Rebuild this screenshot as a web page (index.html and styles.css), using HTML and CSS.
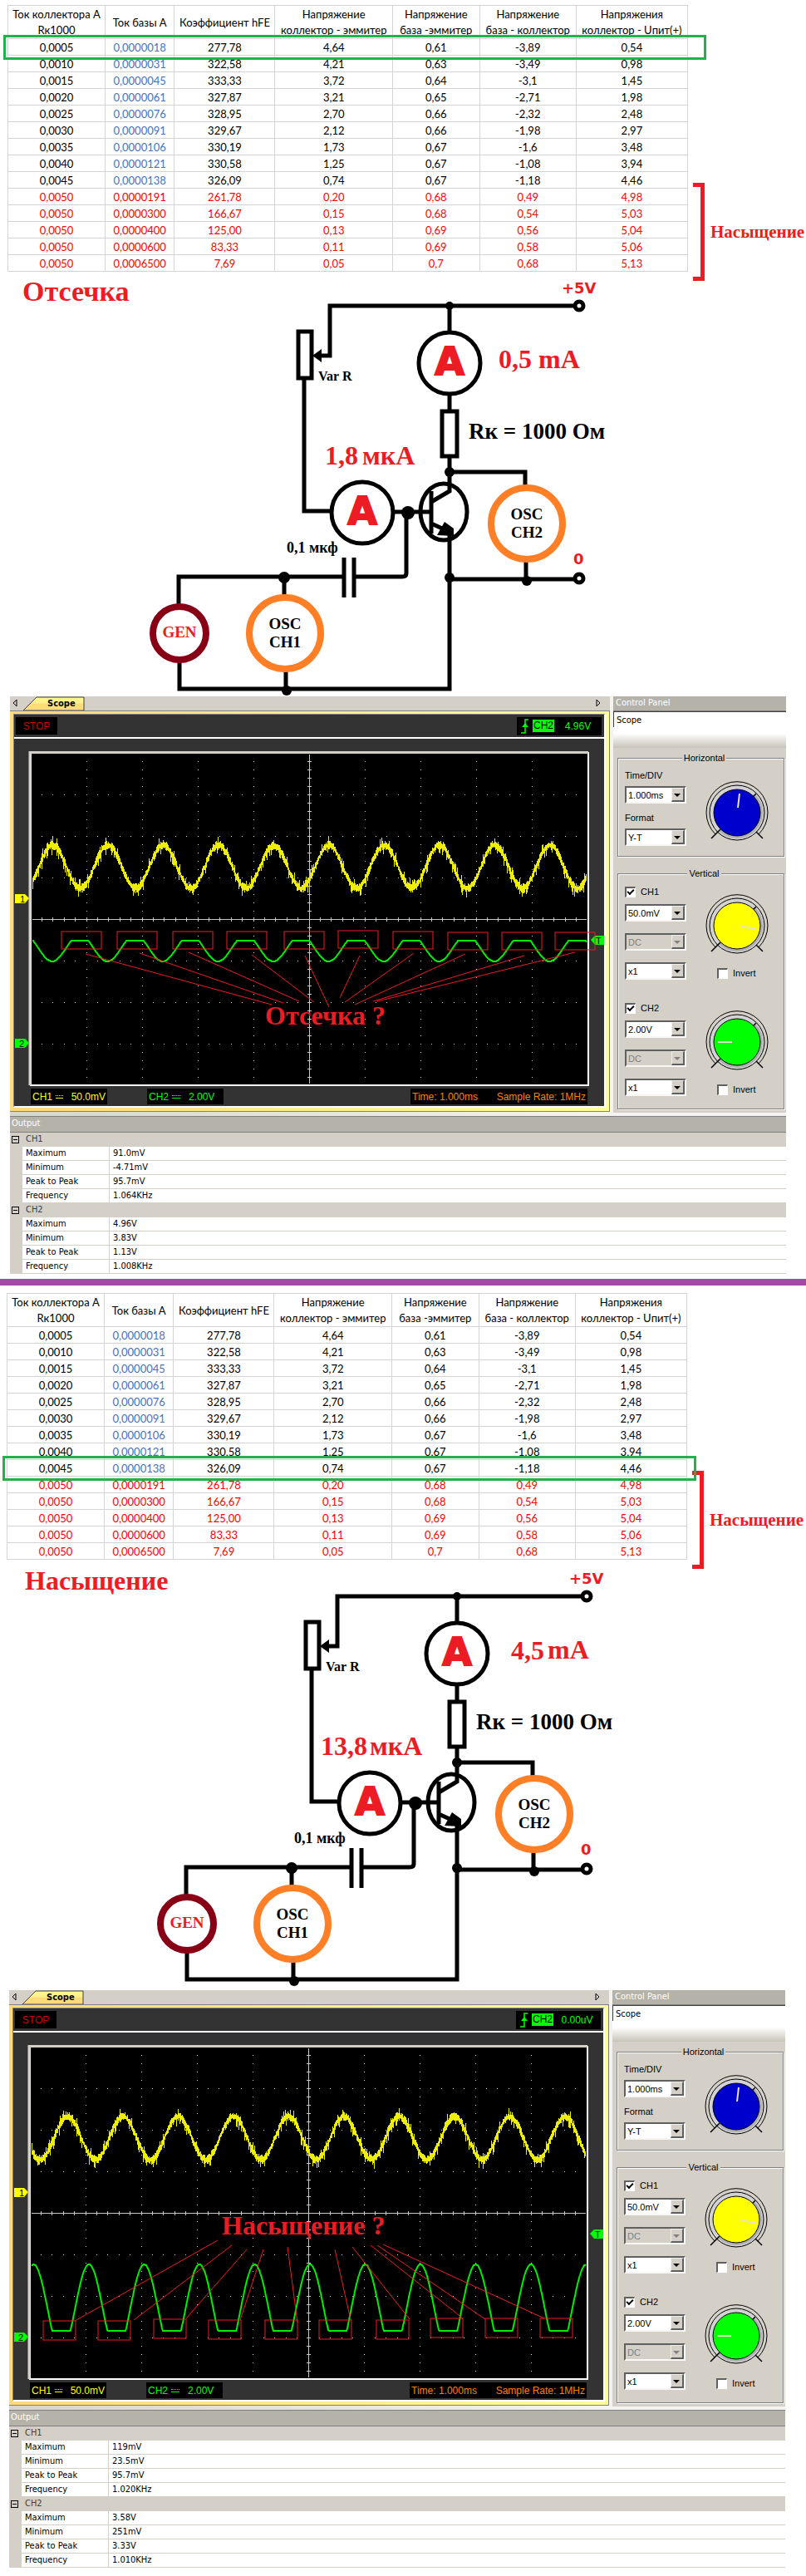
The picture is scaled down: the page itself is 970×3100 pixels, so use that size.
FILE: index.html
```html
<!DOCTYPE html>
<html lang="ru">
<head>
  <meta charset="UTF-8">
  <meta name="viewport" content="width=device-width, initial-scale=1.0">
  <title>Отсечка и насыщение транзистора</title>
  <link rel="stylesheet" href="styles.css">
</head>
<body>
  <!-- shared drawings -->
  <svg class="defs" width="0" height="0" aria-hidden="true">
    <defs>
      <g id="wires">
        <g fill="none" stroke="#000" stroke-width="5">
          <path d="M690 368H397V428H382"/>
          <path d="M366 457V615H398"/>
          <path d="M541 368V400M541 475V493M541 551V591L519 604"/>
          <path d="M541 568H632V585M633 676V698"/>
          <path d="M541 697H692"/>
          <path d="M474 616H519M489 616V690Q489 694 484 694H426"/>
          <path d="M414 694H215V728M342 694V717M344 808V829M216 797V829H541V640L519 630"/>
          <path d="M519 591V642M414 671V719M426 671V719"/>
          <rect x="359" y="399" width="16" height="56"/>
          <rect x="532" y="495" width="18" height="54"/>
        </g>
        <path d="M376 428L387 420V436ZM546 645L526 644L535 628L546 636Z"/>
        <g fill="#fff" stroke="#000" stroke-width="5">
          <circle cx="541" cy="437" r="37"/>
          <circle cx="436" cy="617" r="37"/>
          <circle cx="697" cy="368" r="5"/>
          <circle cx="697" cy="696" r="5"/>
        </g>
        <ellipse cx="534" cy="616" rx="28" ry="34" fill="none" stroke="#000" stroke-width="5"/>
        <g fill="#fff" stroke="#ff7f27" stroke-width="8">
          <circle cx="634" cy="630" r="43"/>
          <circle cx="343" cy="762" r="43"/>
        </g>
        <circle cx="216" cy="762" r="32" fill="#fff" stroke="#880015" stroke-width="8"/>
        <circle cx="541" cy="368" r="5"/>
        <circle cx="541" cy="568" r="6"/>
        <circle cx="491" cy="617" r="8"/>
        <circle cx="541" cy="695" r="6"/>
        <circle cx="634" cy="699" r="6"/>
        <circle cx="342" cy="695" r="7"/>
        <circle cx="345" cy="831" r="6"/>
      </g>

      <g id="graticule">
        <rect x="37" y="906" width="671" height="400" fill="#000" stroke="#fff" stroke-width="2"/>
        <path d="M36 1306V905.5H708" fill="none" stroke="#d4d0c8" stroke-width="3"/>
        <g fill="none" stroke="#c8c8c8" shape-rendering="crispEdges">
          <path stroke-dasharray="1 9" d="M104.5 916V1304M171.5 916V1304M238.5 916V1304M305.5 916V1304M439.5 916V1304M506.5 916V1304M573.5 916V1304M640.5 916V1304"/>
          <path stroke-dasharray="1 12.4" d="M50 956.5H706M50 1006.5H706M50 1056.5H706M50 1156.5H706M50 1206.5H706M50 1256.5H706"/>
          <path d="M372.5 908V1304M39 1106.5H706"/>
          <path stroke-width="5" stroke-dasharray="1 9" d="M372.5 916V1304"/>
          <path stroke-width="5" stroke-dasharray="1 12.4" d="M50 1106.5H706"/>
        </g>
        <path d="M18 1076H30L35 1081L30 1087H18Z" fill="#ff0"/>
        <path d="M18 1250H30L35 1255L30 1261H18Z" fill="#0f0"/>
        <path d="M727 1126H716L711 1131L716 1137H727Z" fill="#0f0"/>
      </g>

      <g id="knob-ring">
        <path d="M-26 26A37 37 0 1 1 26 26" fill="none" stroke="#000"/>
        <circle r="33" fill="#d2d2d4" stroke="#000"/>
        <path d="M22 -22A31 31 0 0 1 -22 22Z" fill="#b0b0b3"/>
        <path d="M-31 31L-20 20M31 31L23 23M19 -19L23 -23" stroke="#000" stroke-width="1.5"/>
      </g>

      <g id="trigger-edge">
        <path d="M1 17H6V1H10" fill="none" stroke="#0f0" stroke-width="1.5"/>
        <path d="M2 10L6 5L10 10Z" fill="#0f0"/>
      </g>
    </defs>
  </svg>

  <section class="mode">
    <div class="measurements">
      <table class="data-table">
        <thead>
          <tr><th>Ток коллектора А<br>Rк1000</th><th>Ток базы А</th><th>Коэффициент hFE</th><th>Напряжение<br>коллектор - эммитер</th><th>Напряжение<br>база -эммитер</th><th>Напряжение<br>база - коллектор</th><th>Напряжения<br>коллектор - Uпит(+)</th></tr>
        </thead>
        <tbody>
          <tr class="marked"><td>0,0005</td><td>0,0000018</td><td>277,78</td><td>4,64</td><td>0,61</td><td>-3,89</td><td>0,54</td></tr>
          <tr><td>0,0010</td><td>0,0000031</td><td>322,58</td><td>4,21</td><td>0,63</td><td>-3,49</td><td>0,98</td></tr>
          <tr><td>0,0015</td><td>0,0000045</td><td>333,33</td><td>3,72</td><td>0,64</td><td>-3,1</td><td>1,45</td></tr>
          <tr><td>0,0020</td><td>0,0000061</td><td>327,87</td><td>3,21</td><td>0,65</td><td>-2,71</td><td>1,98</td></tr>
          <tr><td>0,0025</td><td>0,0000076</td><td>328,95</td><td>2,70</td><td>0,66</td><td>-2,32</td><td>2,48</td></tr>
          <tr><td>0,0030</td><td>0,0000091</td><td>329,67</td><td>2,12</td><td>0,66</td><td>-1,98</td><td>2,97</td></tr>
          <tr><td>0,0035</td><td>0,0000106</td><td>330,19</td><td>1,73</td><td>0,67</td><td>-1,6</td><td>3,48</td></tr>
          <tr><td>0,0040</td><td>0,0000121</td><td>330,58</td><td>1,25</td><td>0,67</td><td>-1,08</td><td>3,94</td></tr>
          <tr><td>0,0045</td><td>0,0000138</td><td>326,09</td><td>0,74</td><td>0,67</td><td>-1,18</td><td>4,46</td></tr>
          <tr class="saturated"><td>0,0050</td><td>0,0000191</td><td>261,78</td><td>0,20</td><td>0,68</td><td>0,49</td><td>4,98</td></tr>
          <tr class="saturated"><td>0,0050</td><td>0,0000300</td><td>166,67</td><td>0,15</td><td>0,68</td><td>0,54</td><td>5,03</td></tr>
          <tr class="saturated"><td>0,0050</td><td>0,0000400</td><td>125,00</td><td>0,13</td><td>0,69</td><td>0,56</td><td>5,04</td></tr>
          <tr class="saturated"><td>0,0050</td><td>0,0000600</td><td>83,33</td><td>0,11</td><td>0,69</td><td>0,58</td><td>5,06</td></tr>
          <tr class="saturated"><td>0,0050</td><td>0,0006500</td><td>7,69</td><td>0,05</td><td>0,7</td><td>0,68</td><td>5,13</td></tr>
        </tbody>
      </table>
      <div class="range">
        <span class="bracket"></span>
        <span class="range-name">Насыщение</span>
      </div>
    </div>

    <div class="schematic">
      <h2>Отсечка</h2>
      <svg viewBox="0 338 970 500">
        <use href="#wires"/>
        <g class="sans">
          <text x="676" y="353">+5V</text>
          <text x="690" y="679">0</text>
          <text class="meter" x="541" y="451">A</text>
          <text class="meter" x="436" y="631">A</text>
        </g>
        <g class="value">
          <text x="600" y="443">0,5 mA</text>
          <text x="391" y="559">1,8</text>
          <text x="436" y="559">мкА</text>
        </g>
        <text class="resistor" x="564" y="528">Rк = 1000 Ом</text>
        <text class="small" x="383" y="458">Var R</text>
        <text class="cap" x="345" y="665">0,1 мкф</text>
        <g class="device">
          <text x="634" y="625">OSC</text><text x="634" y="647">CH2</text>
          <text x="343" y="757">OSC</text><text x="343" y="779">CH1</text>
          <text class="gen" x="216" y="767">GEN</text>
        </g>
      </svg>
    </div>

    <div class="instrument">
      <div class="scope-window">
        <div class="tabs">
          <svg width="722" height="17" viewBox="0 0 722 17" preserveAspectRatio="none">
            <defs>
              <linearGradient id="tab-fill" x1="0" y1="0" x2="0" y2="1"><stop offset="0" stop-color="#fff98f"/><stop offset="0.45" stop-color="#fff08a"/><stop offset="0.5" stop-color="#ffdc7a"/><stop offset="1" stop-color="#ffdc7a"/></linearGradient>
            </defs>
            <path d="M16 17L32 1H89V17Z" fill="url(#tab-fill)" stroke="#404040"/>
            <path d="M8 4L4 8L8 12ZM706 4L710 8L706 12Z" fill="none" stroke="#000"/>
          </svg>
          <span class="tab-name">Scope</span>
        </div>
        <div class="frame">
          <div class="scope">
            <div class="toolbar">
              <span class="lcd stop">STOP</span>
              <span class="lcd trigger"><svg width="12" height="18"><use href="#trigger-edge"/></svg><b>CH2</b><span>4.96V</span></span>
            </div>
            <svg class="screen" viewBox="17 889 710 420">
              <use href="#graticule"/>
              <g class="marker"><text x="24" y="1086">1</text><text x="23" y="1260">2</text><text x="717" y="1136">T</text></g>
              <path class="trace-1" data-peak="63" data-center="1043" data-seed="7"/>
              <path class="trace-2" data-peak="96" data-center="1141" data-amp="16" data-top="1132" data-bottom="1200"/>
              <g class="notes">
                <rect x="74" y="1121" width="48" height="21"/><rect x="141" y="1121" width="48" height="21"/><rect x="208" y="1121" width="48" height="21"/><rect x="273" y="1121" width="48" height="21"/><rect x="342" y="1121" width="48" height="21"/>
                <rect x="407" y="1120" width="48" height="21"/><rect x="473" y="1121" width="48" height="21"/><rect x="539" y="1122" width="48" height="21"/><rect x="604" y="1122" width="48" height="21"/><rect x="668" y="1122" width="48" height="21"/>
                <path d="M103 1148L327 1209M168 1147L341 1207M227 1146L360 1205M303 1149L378 1206M367 1150L396 1212M433 1150L409 1201M498 1147L415 1206M560 1148L427 1209M631 1150L449 1205M692 1146L454 1205"/>
                <text x="319" y="1233">Отсечка ?</text>
              </g>
            </svg>
            <div class="readouts">
              <span class="lcd ch1">CH1<i class="dc"></i><span>50.0mV</span></span>
              <span class="lcd ch2">CH2<i class="dc"></i><span>2.00V</span></span>
              <span class="lcd timing"><span>Time: 1.000ms</span><span>Sample Rate: 1MHz</span></span>
            </div>
          </div>
        </div>
      </div>

      <div class="control-panel">
        <div class="title-bar">Control Panel</div>
        <input class="device-name" type="text" value="Scope" aria-label="Device">
        <div class="strip"></div>
        <fieldset>
          <legend>Horizontal</legend>
          <div class="group">
            <div class="column horizontal">
              <label for="time-1">Time/DIV</label>
              <span class="combo"><select id="time-1"><option>1.000ms</option></select></span>
              <label for="format-1">Format</label>
              <span class="combo"><select id="format-1"><option>Y-T</option></select></span>
            </div>
            <div class="dial first">
              <svg width="80" height="80" viewBox="-40 -40 80 80"><use href="#knob-ring"/><circle r="28" fill="#00c" stroke="#000"/><path class="pointer" d="M1 -6L3 -23"/></svg>
            </div>
          </div>
        </fieldset>
        <fieldset>
          <legend>Vertical</legend>
          <div class="group">
            <div class="column">
              <label class="check"><input type="checkbox" checked>CH1</label>
              <span class="combo"><select aria-label="CH1 scale"><option>50.0mV</option></select></span>
              <span class="combo off"><select aria-label="CH1 coupling" disabled><option>DC</option></select></span>
              <span class="combo"><select aria-label="CH1 probe"><option>x1</option></select></span>
            </div>
            <div class="dial">
              <svg width="80" height="80" viewBox="-40 -40 80 80"><use href="#knob-ring"/><circle r="28" fill="#ff0" stroke="#000"/><path class="pointer" d="M5 1L23 4"/></svg>
              <label class="check"><input type="checkbox">Invert</label>
            </div>
          </div>
          <div class="group">
            <div class="column">
              <label class="check"><input type="checkbox" checked>CH2</label>
              <span class="combo"><select aria-label="CH2 scale"><option>2.00V</option></select></span>
              <span class="combo off"><select aria-label="CH2 coupling" disabled><option>DC</option></select></span>
              <span class="combo"><select aria-label="CH2 probe"><option>x1</option></select></span>
            </div>
            <div class="dial">
              <svg width="80" height="80" viewBox="-40 -40 80 80"><use href="#knob-ring"/><circle r="28" fill="#0f0" stroke="#000"/><path class="pointer" d="M-23 0H-6"/></svg>
              <label class="check"><input type="checkbox">Invert</label>
            </div>
          </div>
        </fieldset>
      </div>

      <div class="output">
        <div class="title-bar">Output</div>
        <table>
          <tbody>
            <tr class="channel"><td><button type="button" aria-label="Collapse CH1"></button></td><th colspan="2">CH1</th></tr>
            <tr><td></td><td>Maximum</td><td>91.0mV</td></tr>
            <tr><td></td><td>Minimum</td><td>-4.71mV</td></tr>
            <tr><td></td><td>Peak to Peak</td><td>95.7mV</td></tr>
            <tr><td></td><td>Frequency</td><td>1.064KHz</td></tr>
            <tr class="channel"><td><button type="button" aria-label="Collapse CH2"></button></td><th colspan="2">CH2</th></tr>
            <tr><td></td><td>Maximum</td><td>4.96V</td></tr>
            <tr><td></td><td>Minimum</td><td>3.83V</td></tr>
            <tr><td></td><td>Peak to Peak</td><td>1.13V</td></tr>
            <tr><td></td><td>Frequency</td><td>1.008KHz</td></tr>
          </tbody>
        </table>
      </div>
    </div>
  </section>

  <hr>

  <section class="mode saturation">
    <div class="measurements">
      <table class="data-table">
        <thead>
          <tr><th>Ток коллектора А<br>Rк1000</th><th>Ток базы А</th><th>Коэффициент hFE</th><th>Напряжение<br>коллектор - эммитер</th><th>Напряжение<br>база -эммитер</th><th>Напряжение<br>база - коллектор</th><th>Напряжения<br>коллектор - Uпит(+)</th></tr>
        </thead>
        <tbody>
          <tr><td>0,0005</td><td>0,0000018</td><td>277,78</td><td>4,64</td><td>0,61</td><td>-3,89</td><td>0,54</td></tr>
          <tr><td>0,0010</td><td>0,0000031</td><td>322,58</td><td>4,21</td><td>0,63</td><td>-3,49</td><td>0,98</td></tr>
          <tr><td>0,0015</td><td>0,0000045</td><td>333,33</td><td>3,72</td><td>0,64</td><td>-3,1</td><td>1,45</td></tr>
          <tr><td>0,0020</td><td>0,0000061</td><td>327,87</td><td>3,21</td><td>0,65</td><td>-2,71</td><td>1,98</td></tr>
          <tr><td>0,0025</td><td>0,0000076</td><td>328,95</td><td>2,70</td><td>0,66</td><td>-2,32</td><td>2,48</td></tr>
          <tr><td>0,0030</td><td>0,0000091</td><td>329,67</td><td>2,12</td><td>0,66</td><td>-1,98</td><td>2,97</td></tr>
          <tr><td>0,0035</td><td>0,0000106</td><td>330,19</td><td>1,73</td><td>0,67</td><td>-1,6</td><td>3,48</td></tr>
          <tr><td>0,0040</td><td>0,0000121</td><td>330,58</td><td>1,25</td><td>0,67</td><td>-1,08</td><td>3,94</td></tr>
          <tr class="marked"><td>0,0045</td><td>0,0000138</td><td>326,09</td><td>0,74</td><td>0,67</td><td>-1,18</td><td>4,46</td></tr>
          <tr class="saturated"><td>0,0050</td><td>0,0000191</td><td>261,78</td><td>0,20</td><td>0,68</td><td>0,49</td><td>4,98</td></tr>
          <tr class="saturated"><td>0,0050</td><td>0,0000300</td><td>166,67</td><td>0,15</td><td>0,68</td><td>0,54</td><td>5,03</td></tr>
          <tr class="saturated"><td>0,0050</td><td>0,0000400</td><td>125,00</td><td>0,13</td><td>0,69</td><td>0,56</td><td>5,04</td></tr>
          <tr class="saturated"><td>0,0050</td><td>0,0000600</td><td>83,33</td><td>0,11</td><td>0,69</td><td>0,58</td><td>5,06</td></tr>
          <tr class="saturated"><td>0,0050</td><td>0,0006500</td><td>7,69</td><td>0,05</td><td>0,7</td><td>0,68</td><td>5,13</td></tr>
        </tbody>
      </table>
      <div class="range">
        <span class="bracket"></span>
        <span class="range-name">Насыщение</span>
      </div>
    </div>

    <div class="schematic">
      <h2>Насыщение</h2>
      <svg viewBox="-9 338 970 500">
        <use href="#wires"/>
        <g class="sans">
          <text x="676" y="353">+5V</text>
          <text x="690" y="679">0</text>
          <text class="meter" x="541" y="451">A</text>
          <text class="meter" x="436" y="631">A</text>
        </g>
        <g class="value">
          <text x="606" y="444">4,5</text>
          <text x="650" y="443">mA</text>
          <text x="377" y="559">13,8</text>
          <text x="436" y="559">мкА</text>
        </g>
        <text class="resistor" x="564" y="528">Rк = 1000 Ом</text>
        <text class="small" x="383" y="458">Var R</text>
        <text class="cap" x="345" y="665">0,1 мкф</text>
        <g class="device">
          <text x="634" y="625">OSC</text><text x="634" y="647">CH2</text>
          <text x="343" y="757">OSC</text><text x="343" y="779">CH1</text>
          <text class="gen" x="216" y="767">GEN</text>
        </g>
      </svg>
    </div>

    <div class="instrument">
      <div class="scope-window">
        <div class="tabs">
          <svg width="722" height="17" viewBox="0 0 722 17" preserveAspectRatio="none">
            <path d="M16 17L32 1H89V17Z" fill="url(#tab-fill)" stroke="#404040"/>
            <path d="M8 4L4 8L8 12ZM706 4L710 8L706 12Z" fill="none" stroke="#000"/>
          </svg>
          <span class="tab-name">Scope</span>
        </div>
        <div class="frame">
          <div class="scope">
            <div class="toolbar">
              <span class="lcd stop">STOP</span>
              <span class="lcd trigger"><svg width="12" height="18"><use href="#trigger-edge"/></svg><b>CH2</b><span>0.00uV</span></span>
            </div>
            <svg class="screen" viewBox="17 889 710 420">
              <use href="#graticule"/>
              <g class="marker"><text x="24" y="1086">1</text><text x="23" y="1260">2</text><text x="717" y="1136">T</text></g>
              <path class="trace-1" data-peak="82" data-center="1016" data-seed="23"/>
              <path class="trace-2" data-peak="108" data-center="1221" data-amp="53" data-top="1100" data-bottom="1248"/>
              <g class="notes">
                <rect x="53" y="1236" width="39" height="23"/><rect x="119" y="1236" width="39" height="23"/><rect x="186" y="1234" width="39" height="23"/><rect x="252" y="1235" width="39" height="23"/><rect x="320" y="1235" width="39" height="23"/>
                <rect x="385" y="1235" width="39" height="23"/><rect x="454" y="1235" width="39" height="23"/><rect x="519" y="1233" width="39" height="23"/><rect x="585" y="1233" width="39" height="23"/><rect x="651" y="1233" width="39" height="23"/>
                <path d="M263 1139L91 1236M280 1145L162 1235M298 1150L225 1233M318 1150L290 1235M347 1147L359 1238M404 1150L423 1235M425 1147L494 1234M447 1145L558 1233M455 1145L585 1234M462 1144L656 1233"/>
                <text x="268" y="1132">Насыщение ?</text>
              </g>
            </svg>
            <div class="readouts">
              <span class="lcd ch1">CH1<i class="dc"></i><span>50.0mV</span></span>
              <span class="lcd ch2">CH2<i class="dc"></i><span>2.00V</span></span>
              <span class="lcd timing"><span>Time: 1.000ms</span><span>Sample Rate: 1MHz</span></span>
            </div>
          </div>
        </div>
      </div>

      <div class="control-panel">
        <div class="title-bar">Control Panel</div>
        <input class="device-name" type="text" value="Scope" aria-label="Device">
        <div class="strip"></div>
        <fieldset>
          <legend>Horizontal</legend>
          <div class="group">
            <div class="column horizontal">
              <label for="time-2">Time/DIV</label>
              <span class="combo"><select id="time-2"><option>1.000ms</option></select></span>
              <label for="format-2">Format</label>
              <span class="combo"><select id="format-2"><option>Y-T</option></select></span>
            </div>
            <div class="dial first">
              <svg width="80" height="80" viewBox="-40 -40 80 80"><use href="#knob-ring"/><circle r="28" fill="#00c" stroke="#000"/><path class="pointer" d="M1 -6L3 -23"/></svg>
            </div>
          </div>
        </fieldset>
        <fieldset>
          <legend>Vertical</legend>
          <div class="group">
            <div class="column">
              <label class="check"><input type="checkbox" checked>CH1</label>
              <span class="combo"><select aria-label="CH1 scale"><option>50.0mV</option></select></span>
              <span class="combo off"><select aria-label="CH1 coupling" disabled><option>DC</option></select></span>
              <span class="combo"><select aria-label="CH1 probe"><option>x1</option></select></span>
            </div>
            <div class="dial">
              <svg width="80" height="80" viewBox="-40 -40 80 80"><use href="#knob-ring"/><circle r="28" fill="#ff0" stroke="#000"/><path class="pointer" d="M5 1L23 4"/></svg>
              <label class="check"><input type="checkbox">Invert</label>
            </div>
          </div>
          <div class="group">
            <div class="column">
              <label class="check"><input type="checkbox" checked>CH2</label>
              <span class="combo"><select aria-label="CH2 scale"><option>2.00V</option></select></span>
              <span class="combo off"><select aria-label="CH2 coupling" disabled><option>DC</option></select></span>
              <span class="combo"><select aria-label="CH2 probe"><option>x1</option></select></span>
            </div>
            <div class="dial">
              <svg width="80" height="80" viewBox="-40 -40 80 80"><use href="#knob-ring"/><circle r="28" fill="#0f0" stroke="#000"/><path class="pointer" d="M-23 0H-6"/></svg>
              <label class="check"><input type="checkbox">Invert</label>
            </div>
          </div>
        </fieldset>
      </div>

      <div class="output">
        <div class="title-bar">Output</div>
        <table>
          <tbody>
            <tr class="channel"><td><button type="button" aria-label="Collapse CH1"></button></td><th colspan="2">CH1</th></tr>
            <tr><td></td><td>Maximum</td><td>119mV</td></tr>
            <tr><td></td><td>Minimum</td><td>23.5mV</td></tr>
            <tr><td></td><td>Peak to Peak</td><td>95.7mV</td></tr>
            <tr><td></td><td>Frequency</td><td>1.020KHz</td></tr>
            <tr class="channel"><td><button type="button" aria-label="Collapse CH2"></button></td><th colspan="2">CH2</th></tr>
            <tr><td></td><td>Maximum</td><td>3.58V</td></tr>
            <tr><td></td><td>Minimum</td><td>251mV</td></tr>
            <tr><td></td><td>Peak to Peak</td><td>3.33V</td></tr>
            <tr><td></td><td>Frequency</td><td>1.010KHz</td></tr>
          </tbody>
        </table>
      </div>
    </div>
  </section>

  <script src="traces.js"></script>
</body>
</html>
```
FILE: styles.css
```css
body {
  margin: 0;
  background: #fff;
  color: #000;
  font-family: Lato, "Open Sans", sans-serif;
  font-size: 13px;
}

svg {
  display: block;
}

.defs {
  position: absolute;
}

.mode {
  padding-top: 6px;
}

hr {
  height: 8px;
  margin: 6px 0 0;
  border: none;
  background: #a349a4;
}

.saturation {
  padding-top: 9px;
}

/* measurement table */

.measurements {
  display: flex;
  align-items: flex-start;
  padding-left: 9px;
}

.saturation .measurements {
  padding-left: 8px;
}

.data-table {
  flex: 1;
  table-layout: fixed;
  border-spacing: 0;
  border-top: 1px solid #d4d4d4;
  border-left: 1px solid #d4d4d4;
  text-align: center;
}

.data-table th,
.data-table td {
  box-sizing: border-box;
  height: 20px;
  padding: 1px 0 0;
  border-right: 1px solid #d4d4d4;
  border-bottom: 1px solid #d4d4d4;
  font-weight: normal;
  line-height: 18px;
  white-space: nowrap;
}

.data-table th {
  height: 40px;
  line-height: 19px;
}

.data-table th:nth-child(1) { width: 14.3%; }
.data-table th:nth-child(2) { width: 10.2%; }
.data-table th:nth-child(3) { width: 14.8%; }
.data-table th:nth-child(4) { width: 17.3%; }
.data-table th:nth-child(5) { width: 12.8%; }
.data-table th:nth-child(6) { width: 14.2%; }

.data-table td:nth-child(2) {
  color: #4472c4;
}

.data-table .saturated td {
  color: #f00;
}

.marked {
  position: relative;
}

.marked::after {
  content: "";
  position: absolute;
  inset: -5px -22px -5px -6px;
  border: 3px solid #22b14c;
}

.saturation .marked::after {
  right: -11px;
}

.range {
  display: flex;
  align-items: center;
  width: 136px;
  height: 118px;
  margin: 214px 0 0 6px;
  gap: 7px;
}

.saturation .range {
  width: 137px;
}

.bracket {
  width: 9px;
  height: 108px;
  border: 5px solid #ed1c24;
  border-left: none;
}

.range-name {
  color: #ed1c24;
  font: bold 21px "Liberation Serif", serif;
}

/* circuit */

.schematic {
  display: grid;
}

.saturation .schematic {
  margin-top: 3px;
}

.schematic > * {
  grid-area: 1 / 1;
}

.schematic > svg {
  width: 100%;
  overflow: visible;
}

.schematic h2 {
  z-index: 1;
  margin: 0 0 0 27px;
  justify-self: start;
  align-self: start;
  color: #ed1c24;
  font: bold 34px/26px "Liberation Serif", serif;
}

.saturation h2 {
  margin-left: 30px;
  font-size: 32px;
  line-height: 22px;
}

.schematic text {
  font-family: "Liberation Serif", serif;
  font-weight: bold;
}

.schematic .sans text {
  fill: #ed1c24;
  font-family: "DejaVu Sans", sans-serif;
  font-size: 18px;
}

.schematic .sans .meter {
  stroke: #ed1c24;
  stroke-width: 2;
  font-size: 46px;
  text-anchor: middle;
}

.value {
  fill: #ed1c24;
  font-size: 32px;
}

.resistor {
  font-size: 27px;
}

.small {
  font-size: 16px;
}

.cap {
  font-size: 18px;
}

.device {
  font-size: 19px;
  text-anchor: middle;
}

.gen {
  fill: #ed1c24;
}

/* oscilloscope program */

.instrument {
  display: grid;
  grid-template-columns: minmax(0, 1fr) 208px;
  gap: 4px;
  margin: 0 24px 0 12px;
  background: linear-gradient(90deg, #d8d5cf, #f4f3ef 75%);
  font-family: "Liberation Sans", Arial, sans-serif;
}

.saturation .instrument {
  margin: 4px 25px 0 11px;
}

.tabs {
  position: relative;
  border-bottom: 1px solid #808080;
  background: #d4d0c8;
}

.tabs svg {
  width: 100%;
}

.tab-name {
  position: absolute;
  top: 1px;
  left: 45px;
  font: bold 11px/15px "DejaVu Sans Condensed", "DejaVu Sans", sans-serif;
}

.frame {
  padding: 3px 4px 4px;
  border-right: 1px solid #808080;
  border-bottom: 1px solid #808080;
  background: linear-gradient(90deg, #ffda7a, #ffff99);
}

.scope {
  border: 1px solid #808080;
  border-right: 2px solid #fff;
  border-bottom: 2px solid #fff;
  background: #333;
}

.toolbar {
  display: flex;
  justify-content: space-between;
  align-items: center;
  box-sizing: border-box;
  height: 29px;
  padding: 0 3px 0 2px;
  border-bottom: 2px solid #fff;
}

.lcd {
  display: flex;
  align-items: center;
  box-sizing: border-box;
  background: #000;
  font-size: 12px;
}

.stop {
  width: 50px;
  height: 21px;
  justify-content: center;
  color: #d00000;
}

.trigger {
  width: 102px;
  height: 22px;
  padding-left: 4px;
  color: #0f0;
}

.trigger b {
  margin-left: 3px;
  padding: 0 1px;
  background: #0f0;
  color: #000;
  font-weight: normal;
  line-height: 15px;
}

.trigger span {
  flex: 1;
  text-align: center;
}

.screen {
  width: 100%;
}

.marker {
  font-size: 11px;
}

.trace-1 {
  fill: none;
  stroke: #eeee00;
  shape-rendering: crispEdges;
}

.trace-2 {
  fill: none;
  stroke: #00ee00;
  stroke-width: 2;
}

.notes {
  fill: none;
  stroke: #ed1c24;
}

.notes text {
  fill: #ed1c24;
  stroke: none;
  font: bold 32px "Liberation Serif", serif;
}

.readouts {
  display: flex;
  padding: 1px 20px 2px;
  gap: 48px;
}

.readouts .lcd {
  height: 19px;
  padding: 0 2px;
}

.ch1,
.ch2 {
  width: 92px;
  gap: 4px;
}

.ch1 {
  color: #ff0;
}

.ch2 {
  color: #0f0;
}

.readouts .ch1 span,
.readouts .ch2 span {
  margin-left: 6px;
}

.dc {
  width: 10px;
  height: 2px;
  border-top: 1px dotted currentColor;
  border-bottom: 1px solid currentColor;
}

.timing {
  width: 213px;
  margin-left: auto;
  justify-content: space-between;
  color: #ff8000;
}

/* control panel */

.control-panel {
  background: #d4d0c8;
  font-size: 11px;
  line-height: 13px;
}

.title-bar {
  padding-left: 3px;
  border-bottom: 1px solid #808080;
  background: #b5b2a9;
  color: #fff;
  font: 11px/16px "DejaVu Sans Condensed", "DejaVu Sans", sans-serif;
}

.control-panel .title-bar {
  height: 17px;
}

.device-name {
  display: block;
  box-sizing: border-box;
  width: 100%;
  height: 19px;
  padding: 0 3px;
  border: none;
  border-top: 1px solid #404040;
  border-left: 1px solid #404040;
  font: 11px "DejaVu Sans Condensed", "DejaVu Sans", sans-serif;
}

.strip {
  height: 25px;
  margin-bottom: 6px;
  background: linear-gradient(#fff 30%, #c8c4ba);
}

fieldset {
  min-width: 0;
  margin: 0 2px 14px 5px;
  padding: 8px 0 12px 8px;
  border: 1px solid #808080;
  box-shadow: 1px 1px 0 #fff, inset 1px 1px 0 #fff;
}

fieldset + fieldset {
  margin-bottom: 4px;
  padding: 9px 0 15px 8px;
}

legend {
  margin: 0 auto;
  padding: 0 2px;
  background: #d4d0c8;
}

.group {
  display: flex;
  gap: 21px;
}

.group + .group {
  margin-top: 28px;
}

.column {
  display: flex;
  flex-direction: column;
  width: 74px;
  gap: 14px;
}

.column .check {
  margin-bottom: -6px;
}

.horizontal {
  gap: 6px;
}

.horizontal .combo + label {
  margin-top: 5px;
}

.check {
  display: flex;
  align-items: center;
  gap: 6px;
}

.check input {
  appearance: none;
  box-sizing: border-box;
  width: 13px;
  height: 13px;
  margin: 0;
  border: 1px solid #fff;
  border-top: 2px solid #606060;
  border-left: 2px solid #606060;
  background: #fff;
}

.check input:checked::after {
  content: "";
  display: block;
  box-sizing: border-box;
  width: 8px;
  height: 5px;
  margin: 1px;
  border-left: 2px solid #000;
  border-bottom: 2px solid #000;
  transform: rotate(-45deg);
}

.combo {
  position: relative;
}

.combo select {
  display: block;
  appearance: none;
  box-sizing: border-box;
  width: 100%;
  height: 21px;
  padding: 0 18px 0 2px;
  border: 2px solid #f8f7f4;
  border-top-color: #606060;
  border-left-color: #606060;
  border-radius: 0;
  background: #fff;
  color: #000;
  font: 11px "Liberation Sans", Arial, sans-serif;
  opacity: 1;
}

.combo::before {
  content: "";
  position: absolute;
  top: 2px;
  right: 2px;
  box-sizing: border-box;
  width: 16px;
  height: 17px;
  border: 1px solid #f0eee8;
  border-right: 2px solid #606060;
  border-bottom: 2px solid #606060;
  background: #d4d0c8;
  pointer-events: none;
}

.combo::after {
  content: "";
  position: absolute;
  top: 9px;
  right: 7px;
  border: 4px solid transparent;
  border-top-color: #000;
  border-bottom: none;
  pointer-events: none;
}

.combo.off select {
  background: #d4d0c8;
  color: #808080;
}

.combo.off::after {
  border-top-color: #808080;
}

.dial {
  padding-top: 7px;
}

.dial.first {
  padding-top: 11px;
}

.dial .check {
  margin: 11px 0 0 16px;
}

.pointer {
  stroke: #e8e4d0;
  stroke-width: 2;
}

/* output list */

.output {
  grid-column: 1 / -1;
}

.output .title-bar {
  height: 18px;
  padding-left: 2px;
  border-top: 1px solid #808080;
}

.output table {
  width: 100%;
  border-spacing: 0;
  background: #fff;
  font: 11px/16px "DejaVu Sans Condensed", "DejaVu Sans", sans-serif;
}

.output td,
.output th {
  height: 16px;
  padding: 0 4px;
  border-bottom: 1px solid #d4d0c8;
  text-align: left;
  font-weight: normal;
}

.output td:first-child {
  width: 11px;
  padding: 0 2px;
  background: #d4d0c8;
}

.output td:nth-child(2) {
  width: 96px;
  border-right: 1px solid #d4d0c8;
}

.output .channel th {
  background: #d4d0c8;
  color: #404040;
}

.output button {
  display: block;
  width: 9px;
  height: 9px;
  padding: 3px 1px;
  border: 1px solid #000;
  background: #000 content-box;
}
```
FILE: traces.js
```js
const LEFT = 39;
const RIGHT = 706;
const PERIOD = 66.5;

// CH1: noisy sine, one vertical stroke per pixel
document.querySelectorAll(".trace-1").forEach(path => {
  const peak = Number(path.dataset.peak);
  const center = Number(path.dataset.center);
  let seed = Number(path.dataset.seed);

  function random() {
    seed = (seed * 16807) % 2147483647;
    return seed / 2147483647;
  }

  for (let i = 0; i < 50; i++) random();

  let d = "";
  for (let x = LEFT; x < RIGHT; x += 1) {
    const y = center - 26 * Math.cos((x - peak) / PERIOD * 2 * Math.PI);
    const up = 2 + random() * 4 + (random() > 0.9 ? 5 : 0);
    const down = 2 + random() * 4 + (random() > 0.85 ? 6 : 0);
    d += `M${x + 0.5} ${Math.round(y - up)}V${Math.round(y + down)}`;
  }
  path.setAttribute("d", d);
});

// CH2: sine clipped by the transistor
document.querySelectorAll(".trace-2").forEach(path => {
  const peak = Number(path.dataset.peak);
  const center = Number(path.dataset.center);
  const amp = Number(path.dataset.amp);
  const top = Number(path.dataset.top);
  const bottom = Number(path.dataset.bottom);

  let d = "";
  for (let x = LEFT; x <= RIGHT; x += 1) {
    let y = center - amp * Math.cos((x - peak) / PERIOD * 2 * Math.PI);
    y = Math.min(bottom, Math.max(top, y));
    d += `${d ? "L" : "M"}${x} ${Math.round(y)}`;
  }
  path.setAttribute("d", d);
});
```
